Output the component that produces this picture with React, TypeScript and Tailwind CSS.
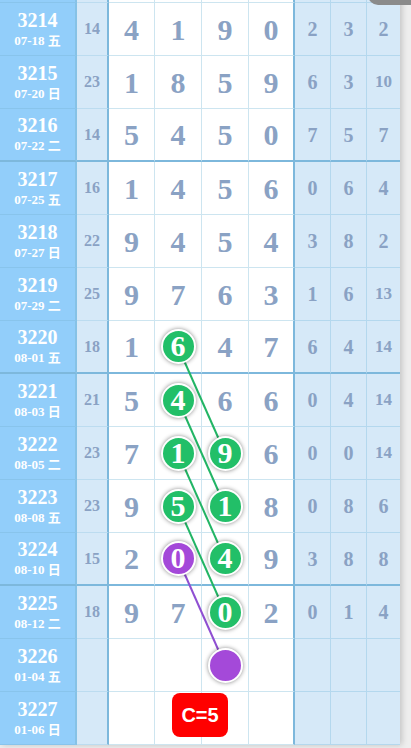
import React from "react";

type Row = {
    period: string;
    date: string;
    sum?: number;
    digits?: number[];
    extra?: number[];
    hidden?: boolean;
};

const rows: Row[] = [
    // row scrolled off the top; only its bottom edge shows
    { period: "3213", date: "07-15 二", hidden: true },
    { period: "3214", date: "07-18 五", sum: 14, digits: [4, 1, 9, 0], extra: [2, 3, 2] },
    { period: "3215", date: "07-20 日", sum: 23, digits: [1, 8, 5, 9], extra: [6, 3, 10] },
    { period: "3216", date: "07-22 二", sum: 14, digits: [5, 4, 5, 0], extra: [7, 5, 7] },
    { period: "3217", date: "07-25 五", sum: 16, digits: [1, 4, 5, 6], extra: [0, 6, 4] },
    { period: "3218", date: "07-27 日", sum: 22, digits: [9, 4, 5, 4], extra: [3, 8, 2] },
    { period: "3219", date: "07-29 二", sum: 25, digits: [9, 7, 6, 3], extra: [1, 6, 13] },
    { period: "3220", date: "08-01 五", sum: 18, digits: [1, 6, 4, 7], extra: [6, 4, 14] },
    { period: "3221", date: "08-03 日", sum: 21, digits: [5, 4, 6, 6], extra: [0, 4, 14] },
    { period: "3222", date: "08-05 二", sum: 23, digits: [7, 1, 9, 6], extra: [0, 0, 14] },
    { period: "3223", date: "08-08 五", sum: 23, digits: [9, 5, 1, 8], extra: [0, 8, 6] },
    { period: "3224", date: "08-10 日", sum: 15, digits: [2, 0, 4, 9], extra: [3, 8, 8] },
    { period: "3225", date: "08-12 二", sum: 18, digits: [9, 7, 0, 2], extra: [0, 1, 4] },
    { period: "3226", date: "01-04 五" },
    { period: "3227", date: "01-06 日" },
];

// marked balls: period-column -> colour
const balls: Record<string, "green" | "purple"> = {
    "3220-1": "green",
    "3221-1": "green",
    "3222-1": "green",
    "3222-2": "green",
    "3223-1": "green",
    "3223-2": "green",
    "3224-1": "purple",
    "3224-2": "green",
    "3225-2": "green",
    "3226-2": "purple",
};

const digitWidths = ["w-[46px]", "w-[47px]", "w-[47px]", "w-[46px]"];
const extraWidths = ["w-[36px]", "w-[36px]", "w-[33px]"];

const serif = "font-[family-name:Liberation_Serif,Noto_Sans_CJK_SC,serif]";

function Ball({ color, value }: { color: "green" | "purple"; value?: number }) {
    return (
        <div
            className={
                "relative z-10 w-[35px] h-[35px] rounded-full border-2 border-white flex items-center justify-center text-white text-[30px] font-bold leading-none shadow-[0_0_4px_rgba(0,0,0,0.45)] " +
                (color === "green" ? "bg-[#22bf68]" : "bg-[#a449d9]")
            }
        >
            {value !== undefined && <span className="-mt-[1px]">{value}</span>}
        </div>
    );
}

export default function App() {
    return (
        <div className={"relative w-[411px] h-[748px] overflow-hidden bg-[#eeeeee] " + serif}>
            <div className="relative w-[400px] -mt-[50px] shadow-[2px_0_6px_rgba(0,0,0,0.18)]">
                {rows.map((row) => {
                    const thick = Number(row.period) % 4 === 0;
                    const bb = thick ? "border-b-2" : "border-b";
                    return (
                        <div key={row.period} className="flex h-[53px]">
                            {/* period */}
                            <div
                                className={
                                    "w-[77px] bg-[#92cefa] border-r-2 border-r-[#86c2e6] flex flex-col items-center justify-center text-white font-bold " +
                                    bb +
                                    (thick ? " border-b-[#7db8dc]" : " border-b-[#88c4ec]")
                                }
                            >
                                {!row.hidden && (
                                    <>
                                        <span className="text-[20px] leading-[22px]">{row.period}</span>
                                        <span className="text-[13px] leading-[18px] mt-[1px]">{row.date}</span>
                                    </>
                                )}
                            </div>

                            {/* sum */}
                            <div
                                className={
                                    "w-[32px] bg-[#d6e9f8] border-r-2 border-r-[#7db8dc] flex items-center justify-center text-[16px] font-bold text-[#8aa2c4] " +
                                    bb +
                                    (thick ? " border-b-[#7db8dc]" : " border-b-[#bcdcf0]")
                                }
                            >
                                {row.sum}
                            </div>

                            {/* digits */}
                            {digitWidths.map((w, i) => {
                                const ball = balls[`${row.period}-${i}`];
                                return (
                                    <div
                                        key={i}
                                        className={
                                            w +
                                            " bg-white flex items-center justify-center text-[30px] font-bold text-[#8aa2c4] " +
                                            bb +
                                            (thick ? " border-b-[#7db8dc]" : " border-b-[#cde5f0]") +
                                            (i === 3 ? " border-r-2 border-r-[#7db8dc]" : " border-r border-r-[#cde5f0]")
                                        }
                                    >
                                        {ball ? (
                                            <Ball color={ball} value={row.digits?.[i]} />
                                        ) : (
                                            row.digits?.[i]
                                        )}
                                    </div>
                                );
                            })}

                            {/* extra */}
                            {extraWidths.map((w, i) => {
                                const v = row.extra?.[i];
                                return (
                                    <div
                                        key={i}
                                        className={
                                            w +
                                            " bg-[#d6e9f8] flex items-center justify-center font-bold text-[#8aa2c4] " +
                                            (v !== undefined && v > 9 ? "text-[17px] " : "text-[20px] ") +
                                            bb +
                                            (thick ? " border-b-[#7db8dc]" : " border-b-[#b4d8ee]") +
                                            (i < 2 ? " border-r border-r-[#b4d8ee]" : "")
                                        }
                                    >
                                        {v}
                                    </div>
                                );
                            })}
                        </div>
                    );
                })}

                {/* trend lines */}
                <svg
                    className="absolute left-0 top-0 z-[5] pointer-events-none"
                    width="400"
                    height="795"
                    viewBox="0 0 400 795"
                >
                    <g stroke="#22b565" strokeWidth="2">
                        <line x1="178" y1="397" x2="225" y2="503" />
                        <line x1="178" y1="450" x2="225" y2="556" />
                        <line x1="178" y1="503" x2="225" y2="609" />
                        <line x1="178" y1="556" x2="225" y2="662" />
                    </g>
                    <line x1="178" y1="609" x2="225" y2="715" stroke="#8f4fd2" strokeWidth="2" />
                </svg>

                {/* result badge */}
                <div className="absolute left-[172px] top-[743px] z-10 w-[56px] h-[44px] rounded-[8px] bg-[#ff0000] flex items-center justify-center text-white text-[20px] font-bold font-[family-name:Liberation_Sans,Arial,sans-serif]">
                    C=5
                </div>
            </div>

            {/* floating control edge */}
            <div className="absolute -top-[15px] -right-[10px] w-[53px] h-[20px] rounded-[12px] bg-[#8b8b8b]" />
        </div>
    );
}
